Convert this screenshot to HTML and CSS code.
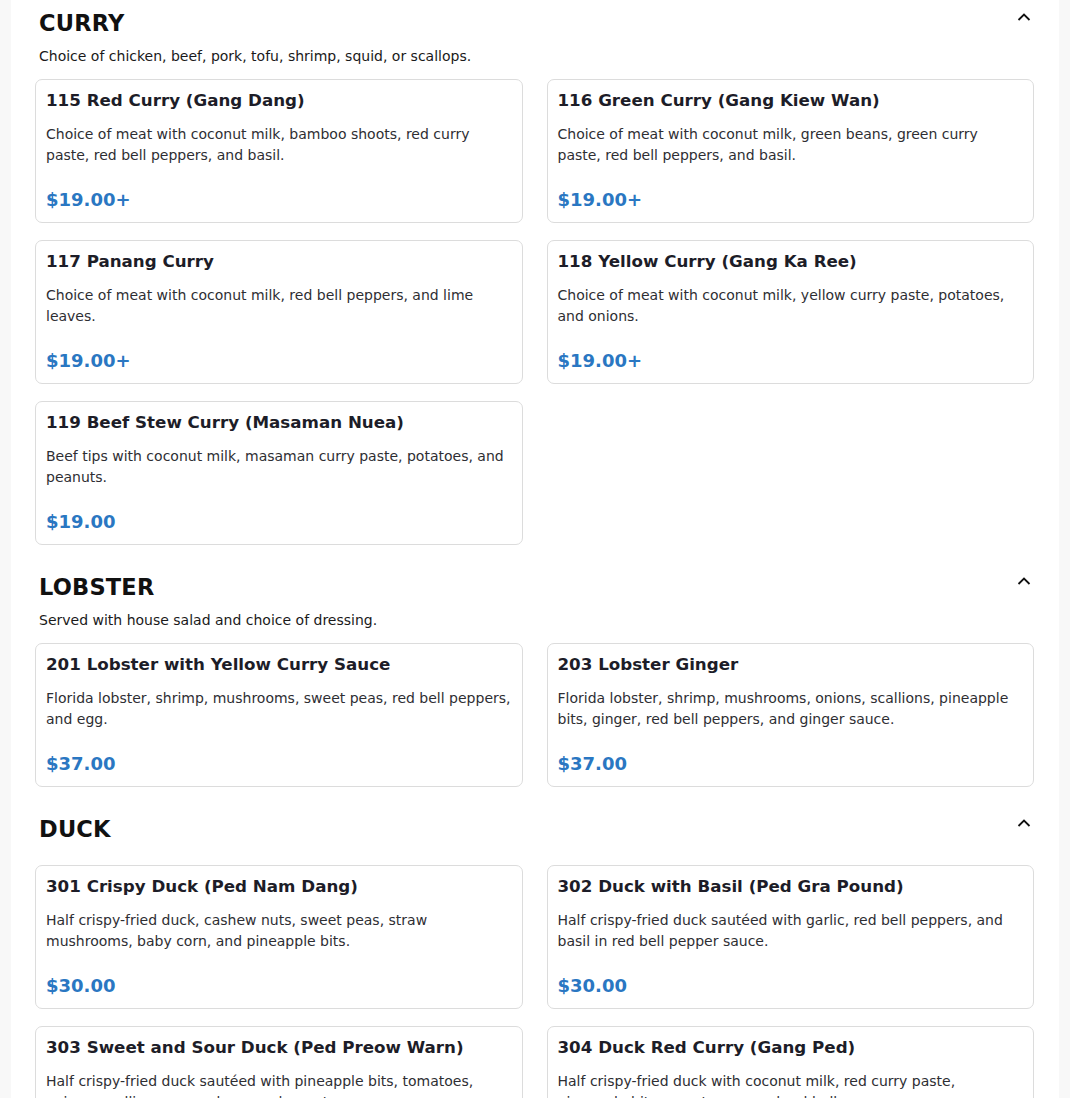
FILE: index.html
```html
<!DOCTYPE html>
<html lang="en">
<head>
<meta charset="utf-8">
<title>Menu</title>
<link rel="stylesheet" href="styles.css">
</head>
<body>
<div class="menu">
  <section class="category">
    <div class="cat-head">
      <h2 class="cat-title">CURRY</h2>
      <svg class="chev" width="14" height="8" viewBox="0 0 14 8"><path d="M1.5 7 L7 1.5 L12.5 7" fill="none" stroke="#111" stroke-width="1.8"/></svg>
    </div>
    <p class="cat-desc">Choice of chicken, beef, pork, tofu, shrimp, squid, or scallops.</p>
    <div class="grid">
      <div class="card"><h3 class="item-title">115 Red Curry (Gang Dang)</h3><p class="item-desc">Choice of meat with coconut milk, bamboo shoots, red curry paste, red bell peppers, and basil.</p><div class="price">$19.00+</div></div>
      <div class="card"><h3 class="item-title">116 Green Curry (Gang Kiew Wan)</h3><p class="item-desc">Choice of meat with coconut milk, green beans, green curry paste, red bell peppers, and basil.</p><div class="price">$19.00+</div></div>
      <div class="card"><h3 class="item-title">117 Panang Curry</h3><p class="item-desc">Choice of meat with coconut milk, red bell peppers, and lime leaves.</p><div class="price">$19.00+</div></div>
      <div class="card"><h3 class="item-title">118 Yellow Curry (Gang Ka Ree)</h3><p class="item-desc">Choice of meat with coconut milk, yellow curry paste, potatoes, and onions.</p><div class="price">$19.00+</div></div>
      <div class="card"><h3 class="item-title">119 Beef Stew Curry (Masaman Nuea)</h3><p class="item-desc">Beef tips with coconut milk, masaman curry paste, potatoes, and peanuts.</p><div class="price">$19.00</div></div>
    </div>
  </section>
  <section class="category">
    <div class="cat-head">
      <h2 class="cat-title">LOBSTER</h2>
      <svg class="chev" width="14" height="8" viewBox="0 0 14 8"><path d="M1.5 7 L7 1.5 L12.5 7" fill="none" stroke="#111" stroke-width="1.8"/></svg>
    </div>
    <p class="cat-desc">Served with house salad and choice of dressing.</p>
    <div class="grid">
      <div class="card"><h3 class="item-title">201 Lobster with Yellow Curry Sauce</h3><p class="item-desc">Florida lobster, shrimp, mushrooms, sweet peas, red bell peppers, and egg.</p><div class="price">$37.00</div></div>
      <div class="card"><h3 class="item-title">203 Lobster Ginger</h3><p class="item-desc">Florida lobster, shrimp, mushrooms, onions, scallions, pineapple bits, ginger, red bell peppers, and ginger sauce.</p><div class="price">$37.00</div></div>
    </div>
  </section>
  <section class="category">
    <div class="cat-head no-desc">
      <h2 class="cat-title">DUCK</h2>
      <svg class="chev" width="14" height="8" viewBox="0 0 14 8"><path d="M1.5 7 L7 1.5 L12.5 7" fill="none" stroke="#111" stroke-width="1.8"/></svg>
    </div>
    <div class="grid">
      <div class="card"><h3 class="item-title">301 Crispy Duck (Ped Nam Dang)</h3><p class="item-desc">Half crispy-fried duck, cashew nuts, sweet peas, straw mushrooms, baby corn, and pineapple bits.</p><div class="price">$30.00</div></div>
      <div class="card"><h3 class="item-title">302 Duck with Basil (Ped Gra Pound)</h3><p class="item-desc">Half crispy-fried duck sautéed with garlic, red bell peppers, and basil in red bell pepper sauce.</p><div class="price">$30.00</div></div>
      <div class="card"><h3 class="item-title">303 Sweet and Sour Duck (Ped Preow Warn)</h3><p class="item-desc">Half crispy-fried duck sautéed with pineapple bits, tomatoes, onions, scallions, cucumbers, and sweet sauce.</p><div class="price">$30.00</div></div>
      <div class="card"><h3 class="item-title">304 Duck Red Curry (Gang Ped)</h3><p class="item-desc">Half crispy-fried duck with coconut milk, red curry paste, pineapple bits, sweet peas, and red bell peppers.</p><div class="price">$30.00</div></div>
    </div>
  </section>
</div>
</body>
</html>
```

FILE: styles.css
```css
html, body {
  margin: 0;
  padding: 0;
  background: #f8f8f8;
  font-family: "DejaVu Sans", sans-serif;
}

.menu {
  margin: 0 11px;
  background: #ffffff;
  min-height: 1098px;
}

.category {
  padding: 8px 25px 19px 24px;
}

.cat-head {
  display: flex;
  align-items: flex-start;
  justify-content: space-between;
  padding: 0 3px 0 4px;
  margin-bottom: 8px;
}

.cat-head.no-desc {
  margin-bottom: 21px;
}

.cat-title {
  margin: 0;
  font-size: 22.5px;
  line-height: 30px;
  font-weight: bold;
  color: #111;
  letter-spacing: 0.2px;
}

.chev {
  margin-top: 5px;
  display: block;
}

.cat-desc {
  margin: 0 0 12px 4px;
  font-size: 14px;
  line-height: 21px;
  color: #1a1a1a;
}

.grid {
  display: grid;
  grid-template-columns: 1fr 1fr;
  column-gap: 24px;
  row-gap: 17px;
}

.card {
  border: 1px solid #dcdcdc;
  border-radius: 7px;
  padding: 10px 10px 9px 10px;
  display: flex;
  flex-direction: column;
  min-height: 123px;
}

.item-title {
  margin: 0;
  font-size: 16.7px;
  line-height: 21px;
  font-weight: bold;
  color: #1d1d28;
}

.item-desc {
  margin: 13px 0 0 0;
  font-size: 14px;
  line-height: 21px;
  color: #2e2e33;
}

.price {
  margin-top: auto;
  padding-top: 18px;
  font-size: 18px;
  line-height: 27px;
  font-weight: bold;
  color: #2a77c2;
}
```
